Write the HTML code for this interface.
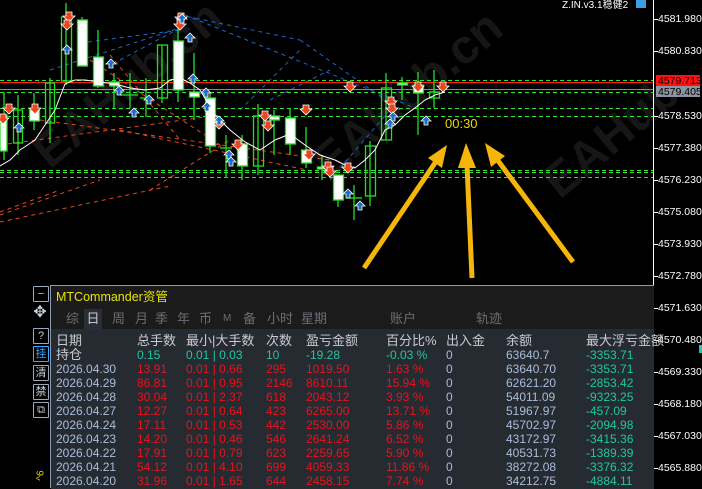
<!DOCTYPE html>
<html><head><meta charset="utf-8"><style>
html,body{margin:0;padding:0;background:#000;width:702px;height:487px;overflow:hidden;font-family:"Liberation Sans","Noto Sans CJK SC",sans-serif}
.ax{position:absolute;left:658px;color:#fff;font-size:10.5px;line-height:12px}
.panel{position:absolute;left:50px;top:285px;width:603px;height:202px;background:#1b1b1b;border-top:1px solid #8a9bb0;border-left:1px solid #8a9bb0}
.tbl{position:absolute;left:0;top:43px;width:603px;height:160px;background:#262a31}
.r{position:absolute;font-size:12px;line-height:14px;white-space:nowrap}
.g{color:#c8ccd2}.red{color:#e8141c}.cy{color:#1ec8a0}.bl{color:#a9bedc}
.ic{position:absolute;left:33px;width:14px;height:14px;border:1px solid #9aa8b8;color:#c8d0da;font-size:11px;line-height:14px;text-align:center;border-radius:1px}
</style></head><body>
<svg width="702" height="487" style="position:absolute;left:0;top:0">
<g font-family="Liberation Sans" font-size="48" fill="#161616" font-weight="bold">
<text x="50" y="170" transform="rotate(-40 50 170)">EAHub.cn</text>
<text x="330" y="180" transform="rotate(-40 330 180)">EAHub.cn</text>
<text x="560" y="200" transform="rotate(-40 560 200)">EAHub</text>
</g>
<g stroke="#1e66c8" stroke-width="1" stroke-dasharray="4 4" fill="none">
<line x1="80" y1="43" x2="180" y2="30"/><line x1="180" y1="15" x2="300" y2="40"/><line x1="185" y1="15" x2="420" y2="110"/>
<line x1="50" y1="70" x2="180" y2="28"/><line x1="120" y1="60" x2="180" y2="28"/><line x1="300" y1="40" x2="400" y2="110"/>
<line x1="240" y1="110" x2="300" y2="50"/><line x1="270" y1="100" x2="330" y2="70"/><line x1="330" y1="180" x2="390" y2="110"/>
</g>
<g stroke="#e8461e" stroke-width="1" stroke-dasharray="4 4" fill="none">
<line x1="0" y1="215" x2="100" y2="180"/><line x1="0" y1="222" x2="170" y2="186"/><line x1="0" y1="212" x2="60" y2="190"/>
<line x1="0" y1="145" x2="220" y2="115"/><line x1="40" y1="120" x2="330" y2="160"/><line x1="120" y1="130" x2="330" y2="175"/>
<line x1="90" y1="60" x2="220" y2="145"/><line x1="110" y1="55" x2="180" y2="140"/><line x1="150" y1="190" x2="230" y2="140"/>
</g>
<g stroke-width="1" fill="none">
<line x1="0" y1="80.5" x2="653" y2="80.5" stroke="#2ee62e" stroke-dasharray="4 3"/>
<line x1="0" y1="82.5" x2="653" y2="82.5" stroke="#ff1a1a"/>
<line x1="0" y1="89.5" x2="653" y2="89.5" stroke="#8a8a8a"/>
<line x1="0" y1="92.5" x2="653" y2="92.5" stroke="#2ee62e" stroke-dasharray="4 3"/>
<line x1="0" y1="108.5" x2="653" y2="108.5" stroke="#2ee62e" stroke-dasharray="4 3"/>
<line x1="0" y1="116.5" x2="653" y2="116.5" stroke="#2ee62e" stroke-dasharray="4 3"/>
<line x1="0" y1="170.5" x2="653" y2="170.5" stroke="#2ee62e" stroke-dasharray="4 3"/>
<line x1="0" y1="172.5" x2="653" y2="172.5" stroke="#2ee62e" stroke-dasharray="4 3"/>
<line x1="0" y1="177.5" x2="653" y2="177.5" stroke="#2ee62e" stroke-dasharray="4 3"/>
</g>
<g stroke="#22e022" stroke-width="1.3">
<line x1="4" y1="92" x2="4" y2="160"/><line x1="18" y1="95" x2="18" y2="155"/><line x1="34" y1="93" x2="34" y2="130"/>
<line x1="50" y1="78" x2="50" y2="143"/><line x1="66" y1="3" x2="66" y2="85"/><line x1="82" y1="17" x2="82" y2="66"/>
<line x1="98" y1="30" x2="98" y2="88"/><line x1="114" y1="73" x2="114" y2="108"/><line x1="130" y1="73" x2="130" y2="108"/>
<line x1="120" y1="95" x2="138" y2="95"/><line x1="146" y1="78" x2="146" y2="117"/><line x1="140" y1="98" x2="152" y2="98"/>
<line x1="162" y1="45" x2="162" y2="103"/><line x1="178" y1="15" x2="178" y2="102"/><line x1="194" y1="53" x2="194" y2="120"/>
<line x1="210" y1="93" x2="210" y2="153"/><line x1="226" y1="135" x2="226" y2="178"/><line x1="220" y1="148" x2="232" y2="148"/>
<line x1="242" y1="135" x2="242" y2="180"/><line x1="258" y1="104" x2="258" y2="175"/><line x1="274" y1="110" x2="274" y2="155"/>
<line x1="290" y1="108" x2="290" y2="155"/><line x1="306" y1="127" x2="306" y2="168"/><line x1="322" y1="155" x2="322" y2="180"/>
<line x1="338" y1="175" x2="338" y2="207"/><line x1="354" y1="185" x2="354" y2="220"/><line x1="346" y1="198" x2="362" y2="198"/>
<line x1="370" y1="141" x2="370" y2="206"/><line x1="386" y1="73" x2="386" y2="140"/><line x1="402" y1="77" x2="402" y2="100"/>
<line x1="418" y1="72" x2="418" y2="135"/><line x1="434" y1="70" x2="434" y2="108"/>
</g>
<g stroke="#22e022" stroke-width="1.3" fill="#fff">
<rect x="0" y="115" width="7" height="36"/>
<rect x="13.5" y="110" width="9" height="33" fill="none"/>
<rect x="29.5" y="110" width="10" height="11"/>
<rect x="45.5" y="83" width="9" height="40" fill="none"/>
<rect x="61.5" y="17" width="10" height="64" fill="none"/>
<rect x="77.5" y="20" width="10" height="46"/>
<rect x="93.5" y="57" width="10" height="29"/>
<rect x="109.5" y="82" width="10" height="4"/>
<rect x="157.5" y="45" width="10" height="53" fill="none"/>
<rect x="173.5" y="41" width="10" height="49"/>
<rect x="189.5" y="92" width="10" height="5"/>
<rect x="205.5" y="98" width="10" height="48"/>
<rect x="237.5" y="144" width="10" height="22"/>
<rect x="253.5" y="116" width="10" height="50" fill="none"/>
<rect x="269.5" y="116" width="10" height="4"/>
<rect x="285.5" y="118" width="10" height="26"/>
<rect x="301.5" y="150" width="10" height="13"/>
<rect x="317.5" y="167" width="10" height="2"/>
<rect x="333.5" y="175" width="10" height="25"/>
<rect x="365.5" y="146" width="10" height="50" fill="none"/>
<rect x="381.5" y="88" width="10" height="52" fill="none"/>
<rect x="397.5" y="83" width="10" height="2"/>
<rect x="413.5" y="85" width="10" height="8"/>
<rect x="429.5" y="92" width="10" height="6" fill="none"/>
</g>
<polyline fill="none" stroke="#fff" stroke-width="1" points="0,166 10,160 20,150 35,140 45,125 55,110 65,84 75,80 85,80 100,82 115,84 130,88 145,90 160,88 170,80 180,78 190,83 200,90 215,115 230,130 245,142 260,150 275,140 290,134 305,145 320,155 335,160 345,165 355,168 365,160 375,150 385,130 395,125 405,115 415,108 425,100 435,95 445,92"/>
<g fill="#e8461e" stroke="#fff" stroke-width="0.8">
<path d="M66 12h6v4h3l-6 6-6-6h3z"/><path d="M64 20h6v4h3l-6 6-6-6h3z"/><path d="M178 13h6v4h3l-6 6-6-6h3z"/><path d="M177 20h6v4h3l-6 6-6-6h3z"/>
<path d="M6 104h6v4h3l-6 6-6-6h3z"/><path d="M32 104h6v4h3l-6 6-6-6h3z"/><path d="M0 114h6v4h3l-6 6-6-6h3z"/><path d="M216 119h6v4h3l-6 6-6-6h3z"/>
<path d="M262 111h6v4h3l-6 6-6-6h3z"/><path d="M265 121h6v4h3l-6 6-6-6h3z"/><path d="M235 140h6v4h3l-6 6-6-6h3z"/><path d="M303 105h6v4h3l-6 6-6-6h3z"/>
<path d="M306 150h6v4h3l-6 6-6-6h3z"/><path d="M325 162h6v4h3l-6 6-6-6h3z"/><path d="M327 167h6v4h3l-6 6-6-6h3z"/><path d="M345 163h6v4h3l-6 6-6-6h3z"/>
<path d="M347 82h6v4h3l-6 6-6-6h3z"/><path d="M388 97h6v4h3l-6 6-6-6h3z"/><path d="M389 104h6v4h3l-6 6-6-6h3z"/><path d="M415 82h6v4h3l-6 6-6-6h3z"/><path d="M440 82h6v4h3l-6 6-6-6h3z"/>
</g>
<g fill="#1e6ec8" stroke="#fff" stroke-width="0.8">
<path d="M67 45l5 5h-3v4h-4v-4h-3z"/><path d="M19 123l5 5h-3v4h-4v-4h-3z"/><path d="M111 59l5 5h-3v4h-4v-4h-3z"/><path d="M119 86l5 5h-3v4h-4v-4h-3z"/>
<path d="M149 95l5 5h-3v4h-4v-4h-3z"/><path d="M182 14l5 5h-3v4h-4v-4h-3z"/><path d="M190 33l5 5h-3v4h-4v-4h-3z"/><path d="M193 74l5 5h-3v4h-4v-4h-3z"/>
<path d="M206 88l5 5h-3v4h-4v-4h-3z"/><path d="M207 102l5 5h-3v4h-4v-4h-3z"/><path d="M219 116l5 5h-3v4h-4v-4h-3z"/><path d="M229 150l5 5h-3v4h-4v-4h-3z"/>
<path d="M231 157l5 5h-3v4h-4v-4h-3z"/><path d="M348 189l5 5h-3v4h-4v-4h-3z"/><path d="M360 201l5 5h-3v4h-4v-4h-3z"/><path d="M393 112l5 5h-3v4h-4v-4h-3z"/>
<path d="M390 119l5 5h-3v4h-4v-4h-3z"/><path d="M426 116l5 5h-3v4h-4v-4h-3z"/><path d="M134 108l5 5h-3v4h-4v-4h-3z"/>
</g>
<g stroke="#f5b50a" stroke-width="5" stroke-linecap="butt">
<line x1="364" y1="268" x2="437" y2="160"/>
<line x1="472" y1="278" x2="467" y2="165"/>
<line x1="573" y1="262" x2="496" y2="158"/>
</g>
<g fill="#f5b50a">
<polygon points="447,145 442,168 428,158"/>
<polygon points="466,143 476,168 458,168"/>
<polygon points="485,143 505,156 491,167"/>
</g>
<text x="445" y="128" fill="#e6d800" font-size="13" font-family="Liberation Sans">00:30</text>
<text x="562" y="8" fill="#fff" font-size="10" font-family="Liberation Sans,Noto Sans CJK SC,sans-serif">Z.IN.v3.1稳健2</text>
<rect x="636" y="0" width="10" height="8" fill="#3aa0e0"/>
<line x1="653.5" y1="0" x2="653.5" y2="487" stroke="#fff"/>
<g stroke="#fff"><line x1="653" y1="19.5" x2="658" y2="19.5"/><line x1="653" y1="51.5" x2="658" y2="51.5"/><line x1="653" y1="116.5" x2="658" y2="116.5"/><line x1="653" y1="148.5" x2="658" y2="148.5"/><line x1="653" y1="180.5" x2="658" y2="180.5"/><line x1="653" y1="212.5" x2="658" y2="212.5"/><line x1="653" y1="244.5" x2="658" y2="244.5"/><line x1="653" y1="276.5" x2="658" y2="276.5"/><line x1="653" y1="308.5" x2="658" y2="308.5"/><line x1="653" y1="340.5" x2="658" y2="340.5"/><line x1="653" y1="372.5" x2="658" y2="372.5"/><line x1="653" y1="404.5" x2="658" y2="404.5"/><line x1="653" y1="436.5" x2="658" y2="436.5"/><line x1="653" y1="468.5" x2="658" y2="468.5"/></g>
<rect x="656" y="75" width="44" height="11" fill="#ff1010"/>
<rect x="656" y="86" width="44" height="11" fill="#8a95a0"/>
<rect x="699" y="345" width="3" height="8" fill="#1ec8a0"/>
</svg>
<div class="ax" style="top:13px">4581.980</div>
<div class="ax" style="top:45px">4580.830</div>
<div class="ax" style="top:75px;color:#000">4579.713</div>
<div class="ax" style="top:86px;color:#000">4579.405</div>
<div class="ax" style="top:110px">4578.530</div>
<div class="ax" style="top:142px">4577.380</div>
<div class="ax" style="top:174px">4576.230</div>
<div class="ax" style="top:206px">4575.080</div>
<div class="ax" style="top:238px">4573.930</div>
<div class="ax" style="top:270px">4572.780</div>
<div class="ax" style="top:302px">4571.630</div>
<div class="ax" style="top:334px">4570.480</div>
<div class="ax" style="top:366px">4569.330</div>
<div class="ax" style="top:398px">4568.180</div>
<div class="ax" style="top:430px">4567.030</div>
<div class="ax" style="top:462px">4565.880</div>

<div class="ic" style="top:286px">−</div>
<div class="ic" style="top:306px;border:none;font-size:16px">✥</div>
<div class="ic" style="top:328px">?</div>
<div class="ic" style="top:346px;color:#3aa8ff;border-color:#3aa8ff">挂</div>
<div class="ic" style="top:365px">清</div>
<div class="ic" style="top:384px">禁</div>
<div class="ic" style="top:402px">⧉</div>
<div style="position:absolute;left:36px;top:470px;color:#e6d800;font-size:10px;transform:rotate(-90deg)">^6</div>

<div class="panel">
<div class="r" style="left:5px;top:4px;color:#e6e600;font-size:12.5px">MTCommander资管</div>
<div class="r" style="left:0;top:23px;width:603px;height:20px;color:#6a6e74;font-size:13px;line-height:20px">
<span style="position:absolute;left:15px">综</span>
<span style="position:absolute;left:33px;width:18px;height:20px;background:#2a2e36;color:#c8ccd2;text-align:center">日</span>
<span style="position:absolute;left:61px">周</span><span style="position:absolute;left:84px">月</span><span style="position:absolute;left:104px">季</span><span style="position:absolute;left:126px">年</span><span style="position:absolute;left:148px">币</span><span style="position:absolute;left:172px;font-size:10px">M</span><span style="position:absolute;left:192px">备</span><span style="position:absolute;left:216px">小时</span><span style="position:absolute;left:250px">星期</span><span style="position:absolute;left:339px">账户</span><span style="position:absolute;left:425px">轨迹</span></div>
<div class="tbl">
<div class="r g" style="left:5px;top:5px;font-size:13px">日期</div>
<div class="r g" style="left:86px;top:5px;font-size:13px">总手数</div>
<div class="r g" style="left:135px;top:5px;font-size:13px">最小|大手数</div>
<div class="r g" style="left:215px;top:5px;font-size:13px">次数</div>
<div class="r g" style="left:255px;top:5px;font-size:13px">盈亏金额</div>
<div class="r g" style="left:335px;top:5px;font-size:13px">百分比%</div>
<div class="r g" style="left:395px;top:5px;font-size:13px">出入金</div>
<div class="r g" style="left:455px;top:5px;font-size:13px">余额</div>
<div class="r g" style="left:535px;top:5px;font-size:13px">最大浮亏金额</div>
<div class="r g" style="left:5px;top:19px;font-size:13px">持仓</div>
<div class="r cy" style="left:86px;top:19px">0.15</div><div class="r cy" style="left:135px;top:19px">0.01 | 0.03</div><div class="r cy" style="left:215px;top:19px">10</div><div class="r cy" style="left:255px;top:19px">-19.28</div><div class="r cy" style="left:335px;top:19px">-0.03 %</div><div class="r bl" style="left:395px;top:19px">0</div><div class="r bl" style="left:455px;top:19px">63640.7</div><div class="r cy" style="left:535px;top:19px">-3353.71</div>
<div class="r bl" style="left:5px;top:33px">2026.04.30</div><div class="r red" style="left:86px;top:33px">13.91</div><div class="r red" style="left:135px;top:33px">0.01 | 0.66</div><div class="r red" style="left:215px;top:33px">295</div><div class="r red" style="left:255px;top:33px">1019.50</div><div class="r red" style="left:335px;top:33px">1.63 %</div><div class="r bl" style="left:395px;top:33px">0</div><div class="r bl" style="left:455px;top:33px">63640.70</div><div class="r cy" style="left:535px;top:33px">-3353.71</div>
<div class="r bl" style="left:5px;top:47px">2026.04.29</div><div class="r red" style="left:86px;top:47px">86.81</div><div class="r red" style="left:135px;top:47px">0.01 | 0.95</div><div class="r red" style="left:215px;top:47px">2146</div><div class="r red" style="left:255px;top:47px">8610.11</div><div class="r red" style="left:335px;top:47px">15.94 %</div><div class="r bl" style="left:395px;top:47px">0</div><div class="r bl" style="left:455px;top:47px">62621.20</div><div class="r cy" style="left:535px;top:47px">-2853.42</div>
<div class="r bl" style="left:5px;top:61px">2026.04.28</div><div class="r red" style="left:86px;top:61px">30.04</div><div class="r red" style="left:135px;top:61px">0.01 | 2.37</div><div class="r red" style="left:215px;top:61px">618</div><div class="r red" style="left:255px;top:61px">2043.12</div><div class="r red" style="left:335px;top:61px">3.93 %</div><div class="r bl" style="left:395px;top:61px">0</div><div class="r bl" style="left:455px;top:61px">54011.09</div><div class="r cy" style="left:535px;top:61px">-9323.25</div>
<div class="r bl" style="left:5px;top:75px">2026.04.27</div><div class="r red" style="left:86px;top:75px">12.27</div><div class="r red" style="left:135px;top:75px">0.01 | 0.64</div><div class="r red" style="left:215px;top:75px">423</div><div class="r red" style="left:255px;top:75px">6265.00</div><div class="r red" style="left:335px;top:75px">13.71 %</div><div class="r bl" style="left:395px;top:75px">0</div><div class="r bl" style="left:455px;top:75px">51967.97</div><div class="r cy" style="left:535px;top:75px">-457.09</div>
<div class="r bl" style="left:5px;top:89px">2026.04.24</div><div class="r red" style="left:86px;top:89px">17.11</div><div class="r red" style="left:135px;top:89px">0.01 | 0.53</div><div class="r red" style="left:215px;top:89px">442</div><div class="r red" style="left:255px;top:89px">2530.00</div><div class="r red" style="left:335px;top:89px">5.86 %</div><div class="r bl" style="left:395px;top:89px">0</div><div class="r bl" style="left:455px;top:89px">45702.97</div><div class="r cy" style="left:535px;top:89px">-2094.98</div>
<div class="r bl" style="left:5px;top:103px">2026.04.23</div><div class="r red" style="left:86px;top:103px">14.20</div><div class="r red" style="left:135px;top:103px">0.01 | 0.46</div><div class="r red" style="left:215px;top:103px">546</div><div class="r red" style="left:255px;top:103px">2641.24</div><div class="r red" style="left:335px;top:103px">6.52 %</div><div class="r bl" style="left:395px;top:103px">0</div><div class="r bl" style="left:455px;top:103px">43172.97</div><div class="r cy" style="left:535px;top:103px">-3415.36</div>
<div class="r bl" style="left:5px;top:117px">2026.04.22</div><div class="r red" style="left:86px;top:117px">17.91</div><div class="r red" style="left:135px;top:117px">0.01 | 0.79</div><div class="r red" style="left:215px;top:117px">623</div><div class="r red" style="left:255px;top:117px">2259.65</div><div class="r red" style="left:335px;top:117px">5.90 %</div><div class="r bl" style="left:395px;top:117px">0</div><div class="r bl" style="left:455px;top:117px">40531.73</div><div class="r cy" style="left:535px;top:117px">-1389.39</div>
<div class="r bl" style="left:5px;top:131px">2026.04.21</div><div class="r red" style="left:86px;top:131px">54.12</div><div class="r red" style="left:135px;top:131px">0.01 | 4.10</div><div class="r red" style="left:215px;top:131px">699</div><div class="r red" style="left:255px;top:131px">4059.33</div><div class="r red" style="left:335px;top:131px">11.86 %</div><div class="r bl" style="left:395px;top:131px">0</div><div class="r bl" style="left:455px;top:131px">38272.08</div><div class="r cy" style="left:535px;top:131px">-3376.32</div>
<div class="r bl" style="left:5px;top:145px">2026.04.20</div><div class="r red" style="left:86px;top:145px">31.96</div><div class="r red" style="left:135px;top:145px">0.01 | 1.65</div><div class="r red" style="left:215px;top:145px">644</div><div class="r red" style="left:255px;top:145px">2458.15</div><div class="r red" style="left:335px;top:145px">7.74 %</div><div class="r bl" style="left:395px;top:145px">0</div><div class="r bl" style="left:455px;top:145px">34212.75</div><div class="r cy" style="left:535px;top:145px">-4884.11</div>
</div>
</div>
</body></html>
